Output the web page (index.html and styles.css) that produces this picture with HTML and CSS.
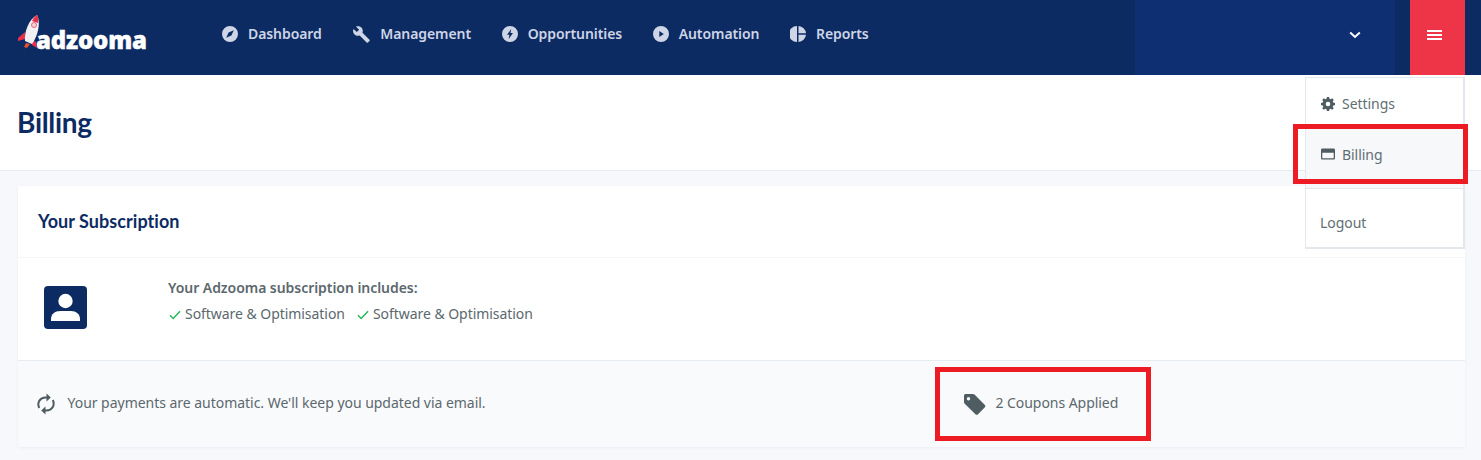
FILE: index.html
```html
<!DOCTYPE html>
<html lang="en">
<head>
<meta charset="utf-8">
<title>Billing</title>
<link rel="stylesheet" href="styles.css">
</head>
<body>
<header class="topbar">
  <a class="logo">
    <svg class="rocket" width="30" height="42" viewBox="0 0 30 42">
      <path d="M8 20 L1 26 L1 29 L8 27 Z" fill="#e8304a"/>
      <path d="M15 28 L19 30 L20 36 L15 33 Z" fill="#e8304a"/>
      <path d="M8 29 C7 20 12 7 20 3 C24 10 21 24 15 32 Z" fill="#f1f1f4"/>
      <path d="M15 9 C17 5 19 3.500 20 3 C21 3.500 21.500 8 21 11 Z" fill="#e8304a"/>
      <circle cx="17" cy="13" r="2.500" fill="#f5d5d8" stroke="#e8304a" stroke-width=".7"/>
      <path d="M9 31 L13 32 L10 36 L7 35 Z" fill="#e9502e"/>
      <path d="M8 37 C7 40 8 42 10 42" fill="none" stroke="#1e2f55" stroke-width=".8"/>
    </svg>
    <span class="logo-text">adzooma</span>
  </a>
  <nav class="nav">
    <a class="nav-item">
      <svg class="nav-icon" viewBox="0 0 16 16"><path fill-rule="evenodd" d="M8 0a8 8 0 1 1 0 16A8 8 0 0 1 8 0zm3.800 4.200L6.600 6.600 4.200 11.800l5.200-2.400z"/></svg>
      Dashboard</a>
    <a class="nav-item">
      <svg class="nav-icon wrench" viewBox="0 0 18 18"><path d="M17.500 14.700l-7-7c.6-1.700.3-3.700-1.100-5.100C7.900 1.100 5.700.8 3.900 1.600l3.200 3.200-2.300 2.300-3.300-3.200C.6 5.700 1 7.900 2.500 9.400c1.400 1.400 3.400 1.700 5.100 1.100l7 7c.4.4 1 .4 1.300 0l1.600-1.500c.4-.4.4-1 0-1.300z"/></svg>
      Management</a>
    <a class="nav-item">
      <svg class="nav-icon" viewBox="0 0 16 16"><path fill-rule="evenodd" d="M8 0a8 8 0 1 1 0 16A8 8 0 0 1 8 0zm1.200 3L5 8.800h2.400L6.700 13 11 7.100H8.500z"/></svg>
      Opportunities</a>
    <a class="nav-item">
      <svg class="nav-icon" viewBox="0 0 16 16"><path fill-rule="evenodd" d="M8 0a8 8 0 1 1 0 16A8 8 0 0 1 8 0zM6.300 5v6l4.500-3z"/></svg>
      Automation</a>
    <a class="nav-item">
      <svg class="nav-icon" viewBox="0 0 16 16"><path d="M7 0v16A8 8 0 0 1 7 0zM8.500 0A8 8 0 0 1 16 7.300H8.500zM8.500 8.700H16A8 8 0 0 1 8.500 16z"/></svg>
      Reports</a>
  </nav>
  <div class="account">
    <svg class="chevron" width="12" height="8" viewBox="0 0 12 8"><path d="M1.200 1.500L6 6l4.800-4.500" fill="none" stroke="#fff" stroke-width="2"/></svg>
  </div>
  <button class="menu-btn" aria-label="Menu"><span></span><span></span><span></span></button>
</header>

<section class="title-band"><h1>Billing</h1></section>

<main class="content">
  <article class="card">
    <div class="card-head"><h2>Your Subscription</h2></div>
    <div class="card-body">
      <svg class="avatar" width="43" height="43" viewBox="0 0 43 43">
        <rect width="43" height="43" rx="4" fill="#0d2b63"/>
        <circle cx="21.500" cy="15" r="7.200" fill="#fff"/>
        <path d="M7 35v-2c0-5 4-8 9-8h11c5 0 9 3 9 8v2z" fill="#fff"/>
      </svg>
      <div class="plan">
        <p class="plan-title">Your Adzooma subscription includes:</p>
        <ul class="features">
          <li><svg width="12" height="10" viewBox="0 0 12 10"><path d="M1 5.200l3.200 3.300L11 1.300" fill="none" stroke="#1db954" stroke-width="1.400"/></svg>Software &amp; Optimisation</li>
          <li><svg width="12" height="10" viewBox="0 0 12 10"><path d="M1 5.200l3.200 3.300L11 1.300" fill="none" stroke="#1db954" stroke-width="1.400"/></svg>Software &amp; Optimisation</li>
        </ul>
      </div>
    </div>
    <div class="card-foot">
      <div class="foot-left">
        <svg class="sync" width="18" height="22" viewBox="0 0 18 22"><path d="M2.200 15C-.3 9.500 3 4.500 8.500 4.500h2" fill="none" stroke="#4f5d62" stroke-width="2"/><path d="M9.500.5l4.300 4-4.300 4z" fill="#4f5d62"/><path d="M15.800 7c2.500 5.500-.8 10.500-6.300 10.500h-2" fill="none" stroke="#4f5d62" stroke-width="2"/><path d="M8.500 21.500l-4.300-4 4.300-4z" fill="#4f5d62"/></svg>
        <span>Your payments are automatic. We'll keep you updated via email.</span>
      </div>
      <div class="foot-right">
        <svg class="tag" width="22" height="21" viewBox="0 0 22 21"><path fill-rule="evenodd" d="M1.500 0H9c.6 0 1.100.2 1.500.6l10.400 10.500c.6.6.6 1.500 0 2.100l-7.100 7.200c-.6.6-1.500.6-2.100 0L1 9.900C.4 9.500 0 8.900 0 8.300V1.500C0 .7.700 0 1.500 0zM4.500 3a1.700 1.700 0 1 0 0 3.400 1.700 1.700 0 0 0 0-3.400z" fill="#4f5d62"/></svg>
        <span>2 Coupons Applied</span>
      </div>
    </div>
  </article>
</main>

<div class="dropdown">
  <a class="drop-item"><svg width="14" height="14" viewBox="0 0 16 16"><path fill="#4f5d62" fill-rule="evenodd" d="M6.700 0h2.600l.4 2.100 1.300.6 1.800-1.200 1.800 1.800-1.200 1.800.6 1.300 2 .4v2.600l-2 .4-.6 1.300 1.200 1.800-1.800 1.800-1.800-1.200-1.300.6-.4 2.100H6.700l-.4-2.100-1.300-.6-1.800 1.200-1.800-1.800 1.200-1.800-.6-1.300-2-.4V6.800l2-.4.6-1.300-1.200-1.800 1.800-1.800L5 2.700l1.300-.6z M8 5.400a2.600 2.600 0 1 0 0 5.200 2.600 2.600 0 0 0 0-5.200z"/></svg>Settings</a>
  <a class="drop-item active"><svg width="14" height="12" viewBox="0 0 14 12"><path fill="#4f5d62" fill-rule="evenodd" d="M1.300 0.500h11.400c.7 0 1.300.6 1.300 1.300v8.400c0 .7-.6 1.300-1.300 1.300H1.300C.6 11.500 0 10.900 0 10.200V1.800C0 1.100.6.500 1.300.5zm0 4.300v5.400h11.400V4.800z"/></svg>Billing</a>
  <a class="drop-item logout">Logout</a>
</div>

<div class="mark mark-billing"></div>
<div class="mark mark-coupons"></div>
</body>
</html>
```
FILE: styles.css
```css
* { box-sizing: border-box; }
html, body { margin: 0; padding: 0; }
body {
  width: 1481px;
  height: 460px;
  overflow: hidden;
  background: #f6f8fb;
  color: #5b686d;
  font-family: "Noto Sans", "Open Sans", sans-serif;
  font-size: 14px;
  letter-spacing: -0.05px;
  position: relative;
}
.topbar {
  height: 75px;
  background: #0d2b63;
  display: flex;
  align-items: stretch;
  padding-right: 16px;
}
.logo {
  position: relative;
  width: 203px;
  padding: 0 0 0 36px;
  display: flex;
  align-items: flex-start;
}
.rocket { position: absolute; left: 17px; top: 12px; }
.logo-text {
  font-family: "Open Sans", sans-serif;
  font-weight: 800;
  font-size: 24px;
  line-height: 30px;
  letter-spacing: -0.2px;
  margin-top: 25px;
  color: #fff;
  -webkit-text-stroke: 0.4px #fff;
}
.nav { display: flex; align-items: center; gap: 30.6px; padding: 0 0 8px 19px; flex: 1; }
.nav-item {
  display: flex;
  align-items: center;
  gap: 10px;
  color: #ced5e6;
  font-weight: 600;
  font-size: 14px;
  line-height: 20px;
  letter-spacing: -0.08px;
}
.nav-icon { width: 16px; height: 16px; fill: #ced5e6; flex: none; }
.nav-icon.wrench { width: 18px; height: 18px; }
.account {
  width: 260px;
  margin-right: 15px;
  background: #0e3072;
  display: flex;
  align-items: center;
  justify-content: flex-end;
  padding: 0 34px 6px 0;
}
.menu-btn {
  width: 55px;
  background: #ee3548;
  border: 0;
  padding: 0 6px 6px 0;
  display: flex;
  flex-direction: column;
  align-items: center;
  justify-content: center;
  gap: 2px;
}
.menu-btn span { display: block; width: 15px; height: 2px; background: #fff; }
.title-band {
  height: 96px;
  background: #fff;
  border-bottom: 1px solid #e3ebf3;
  padding: 0 0 2px 17px;
  display: flex;
  align-items: center;
}
h1 {
  margin: 0;
  font-family: Lato, sans-serif;
  font-weight: 700;
  font-size: 28px;
  letter-spacing: -0.3px;
  color: #0d2b63;
}
.content { padding: 15px 16px 0 18px; }
.card {
  height: 261px;
  background: #fff;
  border-radius: 3px;
  box-shadow: 0 1px 3px rgba(40, 60, 90, 0.05);
  overflow: hidden;
}
.card-head {
  height: 72px;
  padding: 0 20px 2px;
  display: flex;
  align-items: center;
  border-bottom: 1px solid #f4f6f8;
}
h2 {
  margin: 0;
  font-family: Lato, sans-serif;
  font-weight: 700;
  font-size: 18px;
  letter-spacing: 0.05px;
  color: #0d2b63;
}
.card-body {
  height: 102px;
  padding: 0 0 0 26px;
  display: flex;
  align-items: center;
}
.avatar { flex: none; margin-right: 81px; margin-top: -3px; }
.plan { margin-top: -17px; }
.plan-title { margin: 0 0 6px; font-weight: 600; font-size: 14px; line-height: 20px; }
.features { list-style: none; margin: 0; padding: 0; display: flex; gap: 11px; }
.features li { display: flex; align-items: center; gap: 4px; line-height: 20px; }
.features svg { margin-left: 1px; margin-top: 2px; }
.card-foot {
  height: 87px;
  background: #f9fafc;
  border-top: 1px solid #e6edf1;
  display: flex;
  align-items: center;
  padding: 0 0 0 19px;
}
.foot-left { width: 900px; display: flex; align-items: center; gap: 12.500px; letter-spacing: -0.03px; }
.foot-left span, .foot-right span { margin-top: -3px; }
.sync { flex: none; }
.foot-right { display: flex; align-items: center; gap: 10px; margin-left: 26.500px; letter-spacing: -0.05px; }
.dropdown {
  position: absolute;
  left: 1305px;
  top: 77px;
  width: 160px;
  height: 172px;
  background: #fff;
  border: 1px solid #e4e8ec;
  border-right-width: 2px;
  border-bottom-width: 2px;
}
.drop-item {
  display: flex;
  align-items: center;
  gap: 7px;
  height: 51px;
  padding-left: 15px;
  color: #616e73;
}
.drop-item.active { background: #f7f8fa; border-bottom: 1px solid #e4e8ec; height: 60px; padding-bottom: 9px; }
.logout { height: 59px; padding: 7px 0 0 14px; }
.mark { position: absolute; border: 5px solid #ed1c24; }
.mark-billing { left: 1293px; top: 124px; width: 175px; height: 60px; }
.mark-coupons { left: 935px; top: 367px; width: 216px; height: 74px; }
```
